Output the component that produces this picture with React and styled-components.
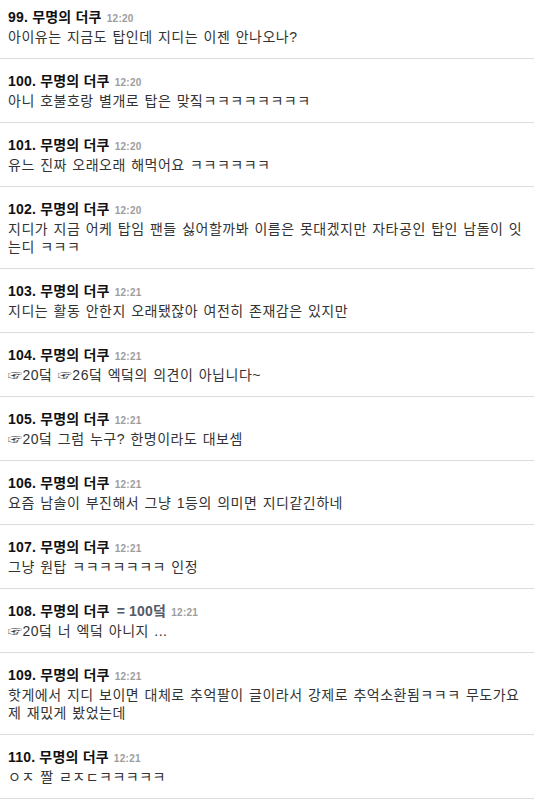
import React from "react";
import styled, { createGlobalStyle } from "styled-components";

const GlobalStyle = createGlobalStyle`
  html, body {
    margin: 0;
    padding: 0;
    background: #fff;
  }
  body {
    font-family: "Liberation Sans", "Noto Sans CJK KR", "DejaVu Sans", sans-serif;
    -webkit-font-smoothing: antialiased;
  }
`;

const Lista = styled.ul`
  list-style: none;
  margin: 0;
  padding: 0;
  width: 534px;
  overflow: hidden;
`;

const Comentario = styled.li`
  padding: 12px 8px 12px;
  border-bottom: 1px solid #dcdcdc;

  &:first-child {
    padding-top: 7px;
  }
`;

const Cabecalho = styled.div`
  display: flex;
  align-items: baseline;
  gap: 5px;
  height: 20px;
  line-height: 20px;
`;

const Nome = styled.span`
  font-size: 14px;
  font-weight: bold;
  letter-spacing: 0.2px;
  color: #111;
`;

const Etiqueta = styled.span`
  font-size: 14px;
  font-weight: bold;
  letter-spacing: 0.2px;
  color: #555a66;
  margin-left: 2px;
`;

const Hora = styled.span`
  font-size: 10px;
  font-weight: bold;
  letter-spacing: 0.3px;
  color: #9d9d9d;
`;

const Texto = styled.p`
  margin: 1px 0 0;
  font-size: 14px;
  line-height: 18px;
  letter-spacing: 0.5px;
  word-spacing: 1px;
  color: #333;
`;

const comentarios = [
  { n: 99, hora: "12:20", texto: "아이유는 지금도 탑인데 지디는 이젠 안나오나?" },
  { n: 100, hora: "12:20", texto: "아니 호불호랑 별개로 탑은 맞짘ㅋㅋㅋㅋㅋㅋㅋㅋ" },
  { n: 101, hora: "12:20", texto: "유느 진짜 오래오래 해먹어요 ㅋㅋㅋㅋㅋㅋ" },
  {
    n: 102,
    hora: "12:20",
    texto:
      "지디가 지금 어케 탑임 팬들 싫어할까봐 이름은 못대겠지만 자타공인 탑인 남돌이 잇는디 ㅋㅋㅋ",
  },
  { n: 103, hora: "12:21", texto: "지디는 활동 안한지 오래됐잖아 여전히 존재감은 있지만" },
  { n: 104, hora: "12:21", texto: "☞20덬 ☞26덬 엑덬의 의견이 아닙니다~" },
  { n: 105, hora: "12:21", texto: "☞20덬 그럼 누구? 한명이라도 대보셈" },
  { n: 106, hora: "12:21", texto: "요즘 남솔이 부진해서 그냥 1등의 의미면 지디같긴하네" },
  { n: 107, hora: "12:21", texto: "그냥 원탑 ㅋㅋㅋㅋㅋㅋㅋ 인정" },
  { n: 108, hora: "12:21", etiqueta: "= 100덬", texto: "☞20덬 너 엑덬 아니지 ..." },
  {
    n: 109,
    hora: "12:21",
    texto:
      "핫게에서 지디 보이면 대체로 추억팔이 글이라서 강제로 추억소환됨ㅋㅋㅋ 무도가요제 재밌게 봤었는데",
  },
  { n: 110, hora: "12:21", texto: "ㅇㅈ 짤 ㄹㅈㄷㅋㅋㅋㅋㅋ" },
];

export default function App() {
  return (
    <>
      <GlobalStyle />
      <Lista>
        {comentarios.map((c) => (
          <Comentario key={c.n}>
            <Cabecalho>
              <Nome>{c.n}. 무명의 더쿠</Nome>
              {c.etiqueta && <Etiqueta>{c.etiqueta}</Etiqueta>}
              <Hora>{c.hora}</Hora>
            </Cabecalho>
            <Texto>{c.texto}</Texto>
          </Comentario>
        ))}
      </Lista>
    </>
  );
}
